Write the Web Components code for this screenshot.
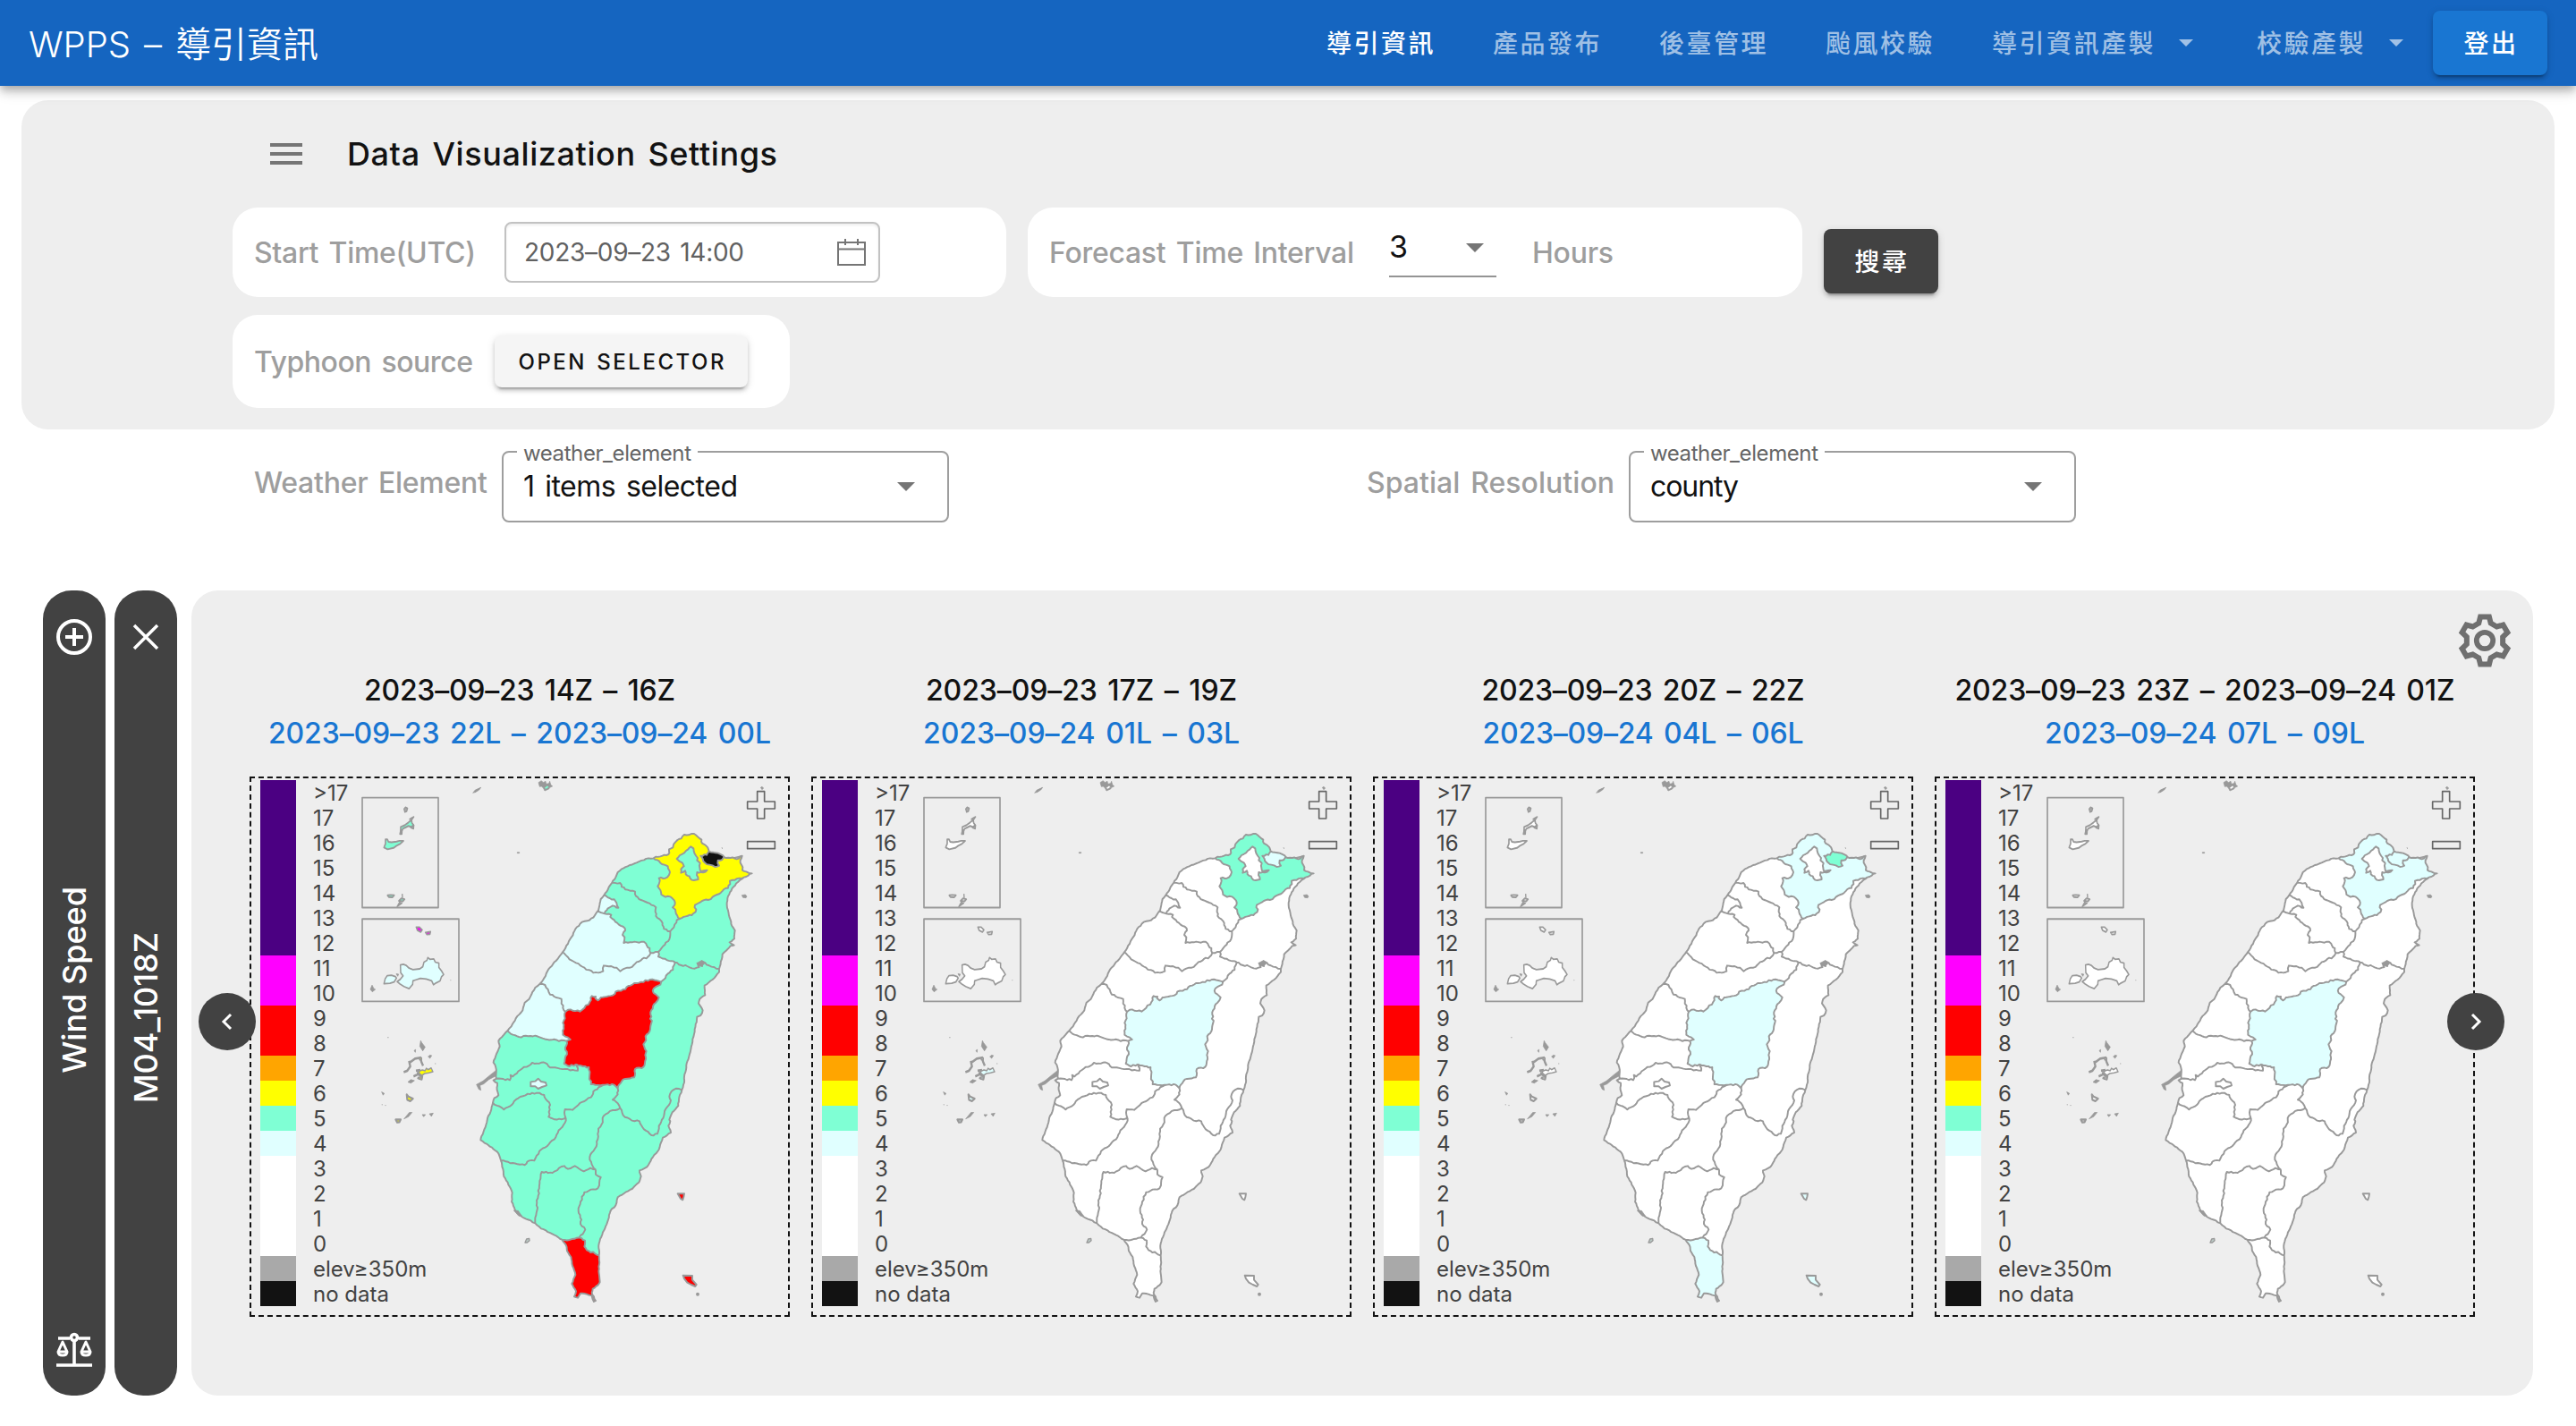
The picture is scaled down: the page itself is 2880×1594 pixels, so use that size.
<!DOCTYPE html>
<html lang="zh-Hant">
<head>
<meta charset="utf-8">
<title>WPPS</title>
<style>
body{margin:0;background:#fff;font-family:Inter,"Noto Sans CJK TC",sans-serif;color:#121212}
</style>
</head>
<body>
<wpps-app></wpps-app>
<script>
const define=(name,html,after)=>{
  const t=document.createElement('template');t.innerHTML=html;
  customElements.define(name,class extends HTMLElement{
    connectedCallback(){
      if(this.shadowRoot)return;
      this.attachShadow({mode:'open'}).append(t.content.cloneNode(true));
      if(after)after(this,this.shadowRoot);
    }
  });
};

/* text that spreads its letters to fill the width in its w attribute */
define('fit-text',`<style>:host{display:inline-block;white-space:nowrap;flex:none;word-spacing:.1em}span{display:inline-block}</style><span><slot></slot></span>`,(el,root)=>{
  const s=root.querySelector('span'),w=+el.getAttribute('w'),n=[...el.textContent].length;
  s.style.letterSpacing=((w-s.getBoundingClientRect().width)/(n-1)).toFixed(3)+'px';
  el.style.width=w+'px';
});

define('menu-arrow',`<style>:host{display:block;width:20px;height:10px;flex:none}svg{display:block;width:100%;height:100%}</style><svg viewBox="0 0 20 10"><path d="M0 0h20L10 10z" fill="currentColor"/></svg>`);

define('nav-link',`<style>:host{box-sizing:border-box;display:flex;align-items:center;padding:0 32px 2px;height:72px;font-size:28px;font-weight:500;letter-spacing:2.5px;color:rgba(255,255,255,.6);white-space:nowrap}
:host([active]){color:#fff}menu-arrow{display:none;width:16px;height:8px;margin:2px 7px 0 26px}:host([menu]) menu-arrow{display:block}</style><slot></slot><menu-arrow></menu-arrow>`);

define('raised-button',`<style>:host{box-sizing:border-box;display:flex;align-items:center;justify-content:center;width:128px;height:72px;border-radius:8px;background:var(--bg,#424242);color:#fff;font-size:28px;font-weight:500;letter-spacing:2.5px;text-indent:2px;padding-bottom:2px;box-shadow:0 6px 2px -4px rgba(0,0,0,.2),0 4px 4px rgba(0,0,0,.14),0 2px 10px rgba(0,0,0,.12);flex:none}</style><slot></slot>`);

define('top-bar',`<style>:host{position:relative;z-index:1;box-sizing:border-box;display:flex;align-items:center;height:96px;padding:0 32px;background:#1565c0;color:#fff;box-shadow:0 4px 8px -2px rgba(0,0,0,.2),0 8px 10px rgba(0,0,0,.14),0 2px 20px rgba(0,0,0,.12)}
.brand{font-size:40px;font-weight:350;flex:1;padding-bottom:2px}nav{display:flex;align-items:center}raised-button{--bg:#1976d2;margin-left:-6px}</style>
<div class="brand"><fit-text w="324">WPPS – 導引資訊</fit-text></div>
<nav><nav-link active>導引資訊</nav-link><nav-link>產品發布</nav-link><nav-link>後臺管理</nav-link><nav-link>颱風校驗</nav-link><nav-link menu>導引資訊產製</nav-link><nav-link menu>校驗產製</nav-link><raised-button>登出</raised-button></nav>`);

define('white-card',`<style>:host{box-sizing:border-box;display:flex;align-items:center;background:#fff;border-radius:28px;padding-left:24px;height:100px;color:#9e9e9e;font-size:32px;font-weight:500}</style><slot></slot>`);

define('date-input',`<style>:host{box-sizing:border-box;display:flex;align-items:center;justify-content:space-between;width:420px;height:68px;border:2px solid #c2c2c2;border-radius:8px;padding:0 14px 0 20px;color:#616161;font-size:28px;font-weight:400;box-shadow:inset 0 2px 3px rgba(0,0,0,.07)}svg{display:block}</style>
<fit-text w="246">2023–09–23 14:00</fit-text>
<svg width="32" height="32" viewBox="0 0 32 32" fill="none" stroke="#757575" stroke-width="2"><path d="M1 5h30v25H1zM1 12.500h30M9 1v7M23 1v7"/></svg>`);

define('interval-select',`<style>:host{box-sizing:border-box;display:flex;justify-content:space-between;align-items:center;width:120px;height:68px;padding-right:14px;border-bottom:2px solid #949494;color:#121212;font-weight:400;font-size:34px;margin-top:-12px}menu-arrow{color:#757575;margin-top:4px}</style>3<menu-arrow></menu-arrow>`);

define('settings-panel',`<style>:host{box-sizing:border-box;display:block;margin:16px 24px 0;height:368px;padding:28px 0 0 236px;background:#eee;border-radius:30px}
.head{display:flex;align-items:center;height:64px;gap:50px;padding-left:42px;font-size:36px;font-weight:500}
.bars{display:flex;flex-direction:column;gap:6px}.bars i{display:block;width:36px;height:4px;background:#757575}
.row{display:flex;margin-top:28px;gap:24px}.row raised-button{margin-top:24px}
.a{width:865px}.b{width:866px}.c{width:623px;height:104px;margin-top:20px}
.open{display:flex;align-items:center;justify-content:center;width:283px;height:58px;margin-left:24px;border-radius:8px;background:#f5f5f5;color:#121212;font-size:24px;font-weight:500;box-shadow:0 6px 2px -4px rgba(0,0,0,.2),0 4px 4px rgba(0,0,0,.14),0 2px 10px rgba(0,0,0,.12)}</style>
<div class="head"><div class="bars"><i></i><i></i><i></i></div><fit-text w="481">Data Visualization Settings</fit-text></div>
<div class="row"><white-card class="a"><fit-text w="248" style="margin-right:32px">Start Time(UTC)</fit-text><date-input></date-input></white-card>
<white-card class="b"><fit-text w="341" style="margin-right:39px">Forecast Time Interval</fit-text><interval-select></interval-select><fit-text w="91" style="margin-left:40px">Hours</fit-text></white-card>
<raised-button>搜尋</raised-button></div>
<white-card class="c"><fit-text w="245">Typhoon source</fit-text><div class="open"><fit-text w="230">OPEN SELECTOR</fit-text></div></white-card>`);

define('outlined-select',`<style>:host{display:block}fieldset{box-sizing:border-box;margin:0;width:500px;height:92px;border:2px solid #9e9e9e;border-radius:8px;padding:0 36px 0 22px;min-width:0}
legend{font-size:24px;line-height:30px;color:#666;padding:0 7px;margin-left:-7px;height:26px}
.v{display:flex;justify-content:space-between;align-items:center;height:50px;font-size:32px;color:#121212;font-weight:400}menu-arrow{color:#757575;margin-top:2px}</style>
<fieldset><legend><fit-text w="188">weather_element</fit-text></legend><div class="v"><slot></slot><menu-arrow></menu-arrow></div></fieldset>`);

define('filter-bar',`<style>:host{box-sizing:border-box;display:flex;align-items:flex-start;height:180px;padding:12px 0 0 284px;color:#9e9e9e;font-size:32px;font-weight:500}
.t{line-height:46px;margin-top:25px}.n{margin-left:467px}outlined-select{margin-left:16px;font-weight:400}</style>
<fit-text class="t" w="261">Weather Element</fit-text><outlined-select><fit-text w="240">1 items selected</fit-text></outlined-select>
<fit-text class="t n" w="277">Spatial Resolution</fit-text><outlined-select><fit-text w="99">county</fit-text></outlined-select>`);

define('side-tab',`<style>:host{box-sizing:border-box;display:flex;flex-direction:column;align-items:center;justify-content:space-between;width:70px;height:900px;padding:32px 0 31px;border-radius:32px;background:#424242;color:#fff;font-size:36px;font-weight:500}
.x{writing-mode:vertical-rl;transform:rotate(180deg);line-height:70px;white-space:nowrap}svg,::slotted(svg){display:block;width:40px;height:40px}</style>
<slot name="top"></slot><div class="x"><slot></slot></div><slot name="bottom"></slot>`);

/* borders shared by neighbouring counties, each listed once */
const A={
ntN:'632,298 655,292 675,288 685,280 684,268 697,262 700,250 712,237 725,232 735,219 750,220 768,216 780,226 793,236 795,248 808,256 818,275',
klN:'818,275 848,281 865,289 868,294',
klS:'868,294 862,303 848,305 847,315 852,323 838,327 820,320 803,312 797,300 790,290 810,287 818,275',
ntE:'868,294 890,297 918,299 922,293 929,290 923,305 927,320 930,338 943,343 962,349 950,356 935,362',
ntYl:'935,362 905,371 888,374 889,385 882,398 868,402 858,413 845,420 830,428 815,438 795,441 780,450 771,455 773,478 760,489 740,493 720,501',
tyNt:'632,298 650,307 668,320 680,325 687,345 678,362 650,365 652,378 646,392 655,405 658,420 672,428 688,427 702,440 703,455 696,463 705,470 708,485 720,501',
tyC:'632,298 615,298 600,304 575,313 545,325 525,334 512,345 505,362 493,380',
tyHs:'493,380 520,381 525,394 545,404 570,410 573,425 590,438 612,447 625,455 640,463 640,492 652,502 662,515 667,535 680,543 688,543',
tyYl:'720,501 710,505 703,520 693,537 688,543',
hsC:'493,380 482,395 475,410 466,422',
hcIn:'466,422 485,432 500,436 508,448 514,464 495,457 478,467 470,476 468,484',
hcC:'466,422 455,435 451,455 447,473 443,477',
hcMl:'443,477 455,480 468,484',
hsMl:'468,484 490,488 487,495 500,505 515,520 536,533 537,540 528,555 535,563 532,582 560,580 600,578 610,592 619,600 622,616',
hsTc:'622,616 648,612',
hsYl:'688,543 685,570 670,588 648,612',
mlC:'443,477 430,497 410,508 392,512 370,535 357,562 345,585 327,613',
mlTc:'327,613 345,630 365,645 400,665 430,682 463,677 465,658 490,660 508,665 520,677 535,668 553,665 570,652 590,640 600,632 608,634 622,616',
tcYl:'648,612 648,628 670,635 690,643 704,647',
ylHl:'704,647 725,657 745,660 770,668 785,663 780,652 795,660 797,645 810,655 835,663 852,669',
tcHl:'704,647 697,672 680,685 672,700 658,712',
tcNt:'658,712 650,710 620,705 590,713 575,717 555,725 530,738 505,745 495,758 475,762 455,765 445,775 437,768 438,762 425,760 418,780 400,800 385,812 345,806 336,813',
tcC:'327,613 305,642 280,670 265,700 250,720',
tcCh:'250,720 268,723 278,738 285,755 305,765 323,770 328,800 336,813',
chNt:'336,813 335,835 328,850 331,870 328,890 345,899 353,906 340,911',
chC:'250,720 235,732 215,770 200,782 193,808 170,835 155,862 142,877',
chYu:'142,877 160,890 180,897 235,893 260,902 290,907 340,911',
yuNt:'340,911 340,925 336,940 342,955 335,970 332,987 350,996 372,989',
yuCi:'372,989 378,1010 335,1005 285,1000 270,985 225,984 185,1008 160,1030 152,1025 150,1042 105,1037',
ciNt:'372,989 395,996 415,999 417,1030 422,1056 470,1058',
khNt:'470,1058 500,1058 512,1070',
ntHl:'658,712 655,722 632,735 632,750 650,765 640,782 630,795 622,822 625,850 615,885 605,895 607,908 598,922 608,945 606,965 603,985 598,998 570,1005 567,1033 530,1040 522,1052 512,1070',
hlKh:'512,1070 510,1085 512,1090 495,1108 512,1120 520,1136',
hlTt:'520,1136 530,1160 560,1178 585,1180 600,1207 625,1227 645,1222 650,1195 660,1175 672,1140 690,1110 685,1097 692,1080 708,1070 727,1075',
khTt:'520,1136 495,1143 465,1162 458,1190 447,1205 445,1240 440,1265 425,1285 418,1300 425,1325 432,1338 438,1342',
khPt:'438,1342 420,1337 398,1348 368,1330 345,1340 333,1330 315,1337 293,1353 257,1350 250,1380 245,1430 240,1445 243,1470 238,1495 235,1522',
ptTt:'438,1342 438,1358 455,1368 450,1395 445,1405 415,1413 400,1418 387,1450 380,1480 390,1510 387,1525 403,1543 383,1570',
ptHe:'325,1577 350,1578 383,1570',
heTt:'383,1570 402,1580 400,1600 415,1615 449,1630',
ciTn:'93,1118 130,1141 150,1130 165,1112 185,1098 210,1088 240,1085 265,1092 270,1105 285,1125 280,1165 300,1174 338,1170',
ciKh:'470,1058 455,1063 430,1080 422,1100 400,1113 380,1125 360,1142 335,1140 333,1150 338,1170',
tnKh:'338,1170 335,1185 320,1205 300,1240 280,1258 255,1275 240,1295 232,1312 215,1312 200,1327 160,1320 120,1312',
yuC:'142,877 130,890 112,910 116,930 103,960 100,970 95,983 103,1000 105,1037',
ciC:'105,1037 95,1043 108,1052 107,1075 112,1093 98,1102 93,1118',
tnC:'93,1118 88,1140 75,1170 68,1200 55,1230 52,1243 65,1253 90,1268 112,1288 118,1305 120,1312',
khC:'120,1312 127,1340 130,1365 143,1385 158,1420 156,1450 165,1470 175,1488 190,1500 235,1522',
ptC:'235,1522 255,1540 300,1562 325,1577',
heC:'325,1577 338,1595 342,1615 355,1635 360,1665 370,1695 358,1725 372,1750 366,1768 378,1772 387,1757 400,1758 415,1763 425,1765 432,1785 438,1782 425,1755 428,1742 445,1730 452,1720 449,1690 450,1660 449,1630',
ttC:'449,1630 449,1590 460,1560 475,1525 488,1480 505,1462 512,1435 540,1417 560,1407 583,1385 590,1365 585,1345 610,1333 630,1300 650,1275 663,1235 690,1218 682,1195 688,1180 685,1175 695,1150 715,1128 718,1100 727,1075',
hlC:'727,1075 735,1050 735,1030 742,1000 745,980 753,955 763,905 770,880 778,830 790,825 797,808 783,785 787,770 805,757 803,725 830,705 852,680 852,669',
ylC:'852,669 863,620 890,592 902,590 887,580 903,568 905,540 895,525 885,490 878,455 882,425 895,400 915,378 935,362'
};
const TAIPEI='757,259 766,265 770,283 780,297 778,305 788,315 787,330 790,342 812,338 798,346 778,345 777,355 782,369 760,371 752,358 740,352 738,340 724,347 724,335 734,325 728,313 718,308 710,300 720,288 735,280 748,268 757,259';
let seed=11;const rnd=()=>(seed=(seed*16807)%2147483647)/2147483647-.5;
const rough=(s,k)=>{
  const p=s.split(' ').map(q=>q.split(',').map(Number)),o=[p[0]];
  for(let i=1;i<p.length;i++){
    const [a,b]=p[i-1],[c,d]=p[i],l=Math.hypot(c-a,d-b),n=Math.max(1,Math.round(l/8));
    for(let j=1;j<n;j++){const t=j/n,r=rnd()*k;o.push([+(a+(c-a)*t-(d-b)/l*r).toFixed(1),+(b+(d-b)*t+(c-a)/l*r).toFixed(1)])}
    o.push([c,d]);
  }
  return o;
};
const ARC={};for(const k in A)ARC[k]=rough(A[k],/C$/.test(k)?3:5.500);
const join=l=>'M'+l.split(' ').map(k=>(k[0]=='-'?[...ARC[k.slice(1)]].reverse():ARC[k]).join(' ')).join(' ')+'z';
const ISLAND=join('ntN klN ntE -ylC -hlC -ttC -heC -ptC -khC -tnC -ciC -yuC -chC -tcC -mlC -hcC -hsC -tyC');
const AREA={
 nt:join('ntN -klS ntE ntYl -tyNt'),kl:join('klN klS'),tp:'M'+rough(TAIPEI,4).join(' ')+'z',
 hc:join('hcIn -hcMl -hcC'),ml:join('hcMl hsMl -mlTc -mlC'),
 tc:join('mlTc hsTc tcYl tcHl tcNt -tcCh -tcC'),ch:join('tcCh chNt -chYu -chC'),
 na:join('-tcNt ntHl -khNt -ciNt -yuNt -chNt'),he:join('ptHe heTt -heC'),
 cy:'M220,1048 235,1046 245,1037 255,1047 270,1050 273,1060 258,1065 245,1071 235,1063 220,1063z'
};
const BORDERS=Object.values(ARC).map(p=>'M'+p.join(' ')).join('');

define('wind-map',`<style>:host{display:block;width:600px;height:600px}svg{display:block}</style>
<svg width="600" height="600" viewBox="-717 30 1800 1800" stroke-linejoin="round"></svg>`,(el,root)=>{
  const f={};(el.getAttribute('fills')||'').split(';').forEach(s=>{const [k,v]=s.split(':');f[k]=v});
  const base=f.base||'#fff',mz=f.mz||'#fff',ph=f.ph||'#fff',km=f.km||'#fff',mg=f.mg||'#fff',ly=f.ly||'#fff';
  root.querySelector('svg').innerHTML=`
<g stroke="#999" stroke-width="5.800">
<path fill="${base}" stroke="none" d="${ISLAND}"/>
${Object.keys(AREA).map(k=>`<path fill="${f[k]||base}" stroke="${k=='tp'||k=='cy'?'#999':'none'}" d="${AREA[k]}"/>`).join('')}
<path fill="none" d="${BORDERS}"/>
<path fill="#999" stroke-width="2" d="M26,79 34,69 53,61 47,69 36,76zM246,44 256,38 262,44 270,40 272,49 281,47 284,40 287,51 293,57 284,61 281,66 267,72 262,62 256,57 250,58zM175,278h7v3h-7zM991,61 996,58 1001,63 996,68zM928,422 940,420 945,426 942,431 932,430zM861,261 863,267M890,297 918,296 926,289M38,1057 60,1045 84,1025 103,1010 103,1028 80,1040 62,1055 50,1060 53,1076 46,1073zM163,1479 178,1480 190,1497 180,1498zM776,650 795,640 803,652 792,661z"/>
<path fill="${base}" stroke-width="2" d="M266,62 276,54 281,60 270,67z"/>
<path fill="#b8c8c4" stroke-width="4" d="M201,1587 206,1575 215,1573 216,1580 208,1587z"/>
<path fill="${ly}" d="M713,1423 735,1423 733,1434 730,1444 723,1440zM731,1697 762,1698 762,1712 776,1728 772,1734 758,1728 745,1721 735,1708z"/>
<circle cx="780" cy="1760" r="3" fill="#999"/>
</g>
<g transform="translate(-750 0) scale(1 1.1862)" stroke="#999" stroke-width="4.500">
<path fill="none" stroke-width="5" d="M405,80H660V391H405zM405,423H729V656H405z"/>
<path fill="#aaa" stroke-width="4" d="M545,112 550,107 557,110 554,119 548,121zM531,183 534,172 539,168 538,183zM564,141 571,137 578,134 572,142zM568,165 578,158 577,168zM522,388 530,376 538,378zM539,352 540,364"/>
<path fill="${mz}" stroke-width="5" d="M478,221 483,210 483,198 489,198 493,205 503,206 520,204 530,202 543,202 533,210 520,216 510,222 490,226zM534,180 534,163 547,158 560,150 570,143 572,152 577,157 570,163 560,160 548,165 541,168zM490,356 500,355 512,356 506,362 494,361zM528,372 536,365 547,367 541,373z"/>
<path fill="${mg}" d="M586,446 597,446 606,454 601,460 590,455zM617,461 634,459 632,466 622,467z"/>
<path fill="${km}" stroke-width="4.500" d="M533,553 543,551 552,554 562,562 575,566 598,564 608,558 612,545 622,540 625,532 632,537 645,536 650,545 662,548 662,560 671,570 678,580 671,586 666,598 652,604 644,609 638,598 620,593 600,591 585,595 575,598 574,608 562,620 545,614 532,607 522,600 532,594 542,584 534,575zM478,606 482,592 489,583 503,582 516,586 520,590 512,601 498,605z"/>
<path fill="#999" stroke-width="2" d="M432,622 438,610 444,620 449,622 439,629zM489,758h5M700,596h3M519,578 527,579 524,585zM601,767 605,773 616,785 608,796 598,783zM579,795 584,792 583,800zM632,808 638,809 632,817 626,812zM648,832h4M470,912 479,916 475,921zM470,948h4M481,950h4M545,988 563,970 572,970 560,982zM606,976 617,976 611,982zM630,974 643,972 637,981zM783,66 789,58 802,52M558,884 568,877 580,880 568,887z"/>
<path fill="none" stroke-width="7" d="M562,824 566,840 556,852 544,856M566,828 582,818 600,815 603,826 609,838M585,852 600,850M577,868 592,862 606,868 604,876 590,872M588,858 600,860"/>
<path fill="${ph}" stroke-width="4" d="M594,854 606,850 616,852 620,845 626,849 636,844 642,855 628,858 614,860 606,865 598,861zM597,816h7v5h-7zM596,870h8v5h-8z"/>
<path fill="${ph}" stroke-width="6" d="M554,919 560,925 575,931 566,938 556,934zM517,990 534,990 530,997 522,998z"/>
</g>
<g fill="#eee" stroke="#666" stroke-width="5"><path d="M980,74h24v34h35v24h-35v33h-24v-33h-33v-24h33zM947,242h92v24h-92z"/></g>`;
});

define('map-card',`<style>:host{display:block;width:604px;flex:none}
.t{display:flex;flex-direction:column;align-items:center;font-size:32px;font-weight:500;line-height:48px;height:120px;white-space:nowrap}.t ::slotted([slot=l]){color:#1976d2}
.box{box-sizing:border-box;width:604px;height:604px;display:grid;border:2px dashed #121212}
.box>*{grid-area:1/1}
.lg{display:flex;gap:19px;padding:2px 0 0 10px;font-size:24px;color:#424242;line-height:30px}
.bar{width:40px;height:588px;background:linear-gradient(#4b0082 196px,#f0f 0 252px,red 0 308px,orange 0 336px,#ff0 0 364px,#7fffd4 0 392px,#e0ffff 0 420px,#fff 0 532px,#a9a9a9 0 560px,#121212 0)}
.n div{height:28px}</style>
<div class="t"><slot name="z"></slot><slot name="l"></slot></div>
<div class="box"><wind-map></wind-map><div class="lg"><div class="bar"></div><div class="n"></div></div></div>`,(el,root)=>{
  const L=['&gt;17'];for(let i=17;i>=0;i--)L.push(i);L.push('elev≥350m','no data');
  root.querySelector('.n').innerHTML=L.map(t=>`<div>${t}</div>`).join('');
  const old=root.querySelector('wind-map'),m=document.createElement('wind-map');
  m.setAttribute('fills',el.getAttribute('fills'));old.replaceWith(m);
});

define('gear-icon',`<style>:host{display:block;width:60px;height:60px}svg{display:block}</style><svg width="60" height="60" viewBox="-30 -30 60 60" fill="none" stroke="#6f6f6f"><circle r="9.200" stroke-width="5.800"/><path stroke-width="6"/></svg>`,(el,root)=>{
  let d='';for(let i=0;i<6;i++){const a=i*Math.PI/3;for(const [x,y] of [[-6.700,-19.400],[-4.900,-26.500],[4.900,-26.500],[6.700,-19.400]])d+=(d?' ':'M')+(x*Math.cos(a)-y*Math.sin(a)).toFixed(2)+','+(x*Math.sin(a)+y*Math.cos(a)).toFixed(2)}
  root.querySelector('path').setAttribute('d',d+'z');
});

define('round-button',`<style>:host{display:flex;align-items:center;justify-content:center;width:64px;height:64px;border-radius:50%;background:#424242}:host([next]) svg{transform:scaleX(-1)}</style><svg width="20" height="24" viewBox="0 0 20 24" fill="none" stroke="#fff" stroke-width="3"><path d="M14 4 6 12l8 8"/></svg>`);

define('map-panel',`<style>:host{position:relative;box-sizing:border-box;display:block;width:2618px;height:900px;background:#eee;border-radius:30px;padding:88px 0 0 65px;margin-left:16px}
.maps{display:flex;gap:24px}gear-icon{position:absolute;top:26px;right:24px}round-button{position:absolute;top:450px;left:8px}round-button[next]{left:auto;right:32px}</style>
<div class="maps">
<map-card fills="base:#7fffd4;nt:#ff0;kl:#121212;hc:#e0ffff;ml:#e0ffff;tc:#e0ffff;ch:#e0ffff;cy:#e0ffff;na:red;he:red;ly:red;mz:#7fffd4;km:#e0ffff;mg:#f0f;ph:#ff0"><fit-text slot="z" w="348">2023–09–23 14Z – 16Z</fit-text><fit-text slot="l" w="562">2023–09–23 22L – 2023–09–24 00L</fit-text></map-card>
<map-card fills="nt:#7fffd4;kl:#e0ffff;na:#e0ffff;ph:#e0ffff"><fit-text slot="z" w="348">2023–09–23 17Z – 19Z</fit-text><fit-text slot="l" w="354">2023–09–24 01L – 03L</fit-text></map-card>
<map-card fills="nt:#e0ffff;kl:#7fffd4;na:#e0ffff;he:#e0ffff;ly:#e0ffff"><fit-text slot="z" w="361">2023–09–23 20Z – 22Z</fit-text><fit-text slot="l" w="359">2023–09–24 04L – 06L</fit-text></map-card>
<map-card fills="nt:#e0ffff;kl:#e0ffff;na:#e0ffff"><fit-text slot="z" w="559">2023–09–23 23Z – 2023–09–24 01Z</fit-text><fit-text slot="l" w="358">2023–09–24 07L – 09L</fit-text></map-card>
</div><gear-icon></gear-icon><round-button></round-button><round-button next></round-button>`);

define('wpps-app',`<style>:host{display:block;width:2880px;height:1594px;overflow:hidden}.main{display:flex;padding-left:48px}side-tab+side-tab{margin-left:10px}</style>
<top-bar></top-bar><settings-panel></settings-panel><filter-bar></filter-bar>
<div class="main">
<side-tab><svg slot="top" viewBox="0 0 40 40" fill="none" stroke="#fff" stroke-width="4"><circle cx="20" cy="20" r="18"/><path d="M20 10v20M10 20h20"/></svg><span style="margin-top:30px">Wind Speed</span>
<svg slot="bottom" viewBox="0 0 40 40" fill="none" stroke="#fff" stroke-width="3.600"><path d="M0 37h40M20 9v28M2 7h13M25 7h13"/><circle cx="20" cy="6" r="3.500"/><path stroke-width="3" stroke-linejoin="round" d="M7 11 2 22q0 4 5 4t5-4zM33 11l-5 11q0 4 5 4t5-4zM2 22h10M28 22h10"/></svg></side-tab>
<side-tab><svg slot="top" viewBox="0 0 40 40" fill="none" stroke="#fff" stroke-width="3.500"><path d="M7 7l26 26M33 7 7 33"/></svg><span style="margin-bottom:54px">M04_1018Z</span><svg slot="bottom" viewBox="0 0 40 40"></svg></side-tab>
<map-panel></map-panel></div>`);
</script>
</body>
</html>
